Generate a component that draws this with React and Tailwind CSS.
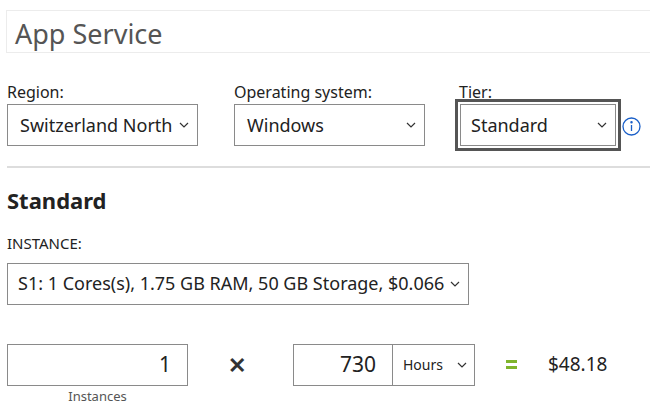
const Chev = () => (
  <svg width="10" height="6" viewBox="0 0 10 6" fill="none" stroke="#333" strokeWidth="1.2"><path d="M1 1l4 4 4-4" /></svg>
);

function Sel({ w, text, pad = "pl-[12px] pr-[8px]" }) {
  return (
    <div className={`h-[42px] border border-[#8a8a8a] bg-white flex items-center justify-between ${pad} text-[18px] text-[#222]`} style={{ width: w }}>
      <span>{text}</span><Chev />
    </div>
  );
}

export default function App() {
  return (
    <div className="w-[650px] h-[413px] bg-white overflow-hidden font-['Liberation_Sans',Arial,sans-serif] text-[#222]">
      <div className="ml-[6px] mt-[10px] h-[43px] border border-[#ececec] border-r-0 flex items-center pl-[8px] pt-[6px] text-[27px] text-[#555]">App Service</div>
      <div className="flex mt-[27px] pl-[7px]">
        <div className="w-[227px]">
          <div className="text-[16px] h-[26px]">Region:</div>
          <div className="mt-[-2px]"><Sel w={191} text="Switzerland North" /></div>
        </div>
        <div className="w-[221px]">
          <div className="text-[16px] h-[26px]">Operating system:</div>
          <div className="mt-[-2px]"><Sel w={191} text="Windows" /></div>
        </div>
        <div>
          <div className="text-[16px] h-[26px] ml-[4px]">Tier:</div>
          <div className="flex items-center">
            <div className="mt-[-7px] border-[3px] border-[#555] p-[2px] bg-white">
              <div className="h-[42px] w-[156px] border border-[#8a8a8a] flex items-center justify-between pl-[10px] pr-[8px] text-[18px]"><span>Standard</span><Chev /></div>
            </div>
            <svg className="ml-[1px] mt-[-4px]" width="19" height="19" viewBox="0 0 19 19" fill="none" stroke="#1a5fc8" strokeWidth="1.3"><circle cx="9.5" cy="9.5" r="8.5" /><path d="M9.5 8v6" /><circle cx="9.5" cy="5.3" r="0.6" fill="#1a5fc8" /></svg>
          </div>
        </div>
      </div>
      <div className="ml-[7px] mt-[15px] h-[2px] bg-[#ddd]" />
      <div className="ml-[7px] mt-[18px] text-[22px] font-bold leading-[28px]">Standard</div>
      <div className="ml-[7px] mt-[18px] text-[15px] text-[#222]">INSTANCE:</div>
      <div className="ml-[7px] mt-[8px]"><Sel w={462} text="S1: 1 Cores(s), 1.75 GB RAM, 50 GB Storage, $0.066" pad="pl-[10px] pr-[8px]" /></div>
      <div className="flex items-start ml-[7px] mt-[39px]">
        <div className="w-[181px] flex flex-col items-center">
          <div className="w-[181px] h-[42px] border border-[#8a8a8a] flex items-center justify-end pr-[16px] text-[21px]">1</div>
          <div className="text-[13px] text-[#555] mt-[1px]">Instances</div>
        </div>
        <div className="w-[105px] h-[42px] flex items-center justify-center text-[22px] font-bold text-[#333] pr-[8px]">✕</div>
        <div className="flex h-[42px] border border-[#8a8a8a]">
          <div className="w-[99px] border-r border-[#8a8a8a] flex items-center justify-end pr-[16px] text-[21px]">730</div>
          <div className="w-[81px] flex items-center justify-between pl-[10px] pr-[7px] text-[14px]"><span>Hours</span><Chev /></div>
        </div>
        <div className="w-[73px] h-[42px] flex items-center justify-center">
          <div className="flex flex-col gap-[3px]"><div className="w-[11px] h-[3px] bg-[#7fb42c]" /><div className="w-[11px] h-[3px] bg-[#7fb42c]" /></div>
        </div>
        <div className="h-[42px] flex items-center text-[19px]">$48.18</div>
      </div>
    </div>
  );
}
